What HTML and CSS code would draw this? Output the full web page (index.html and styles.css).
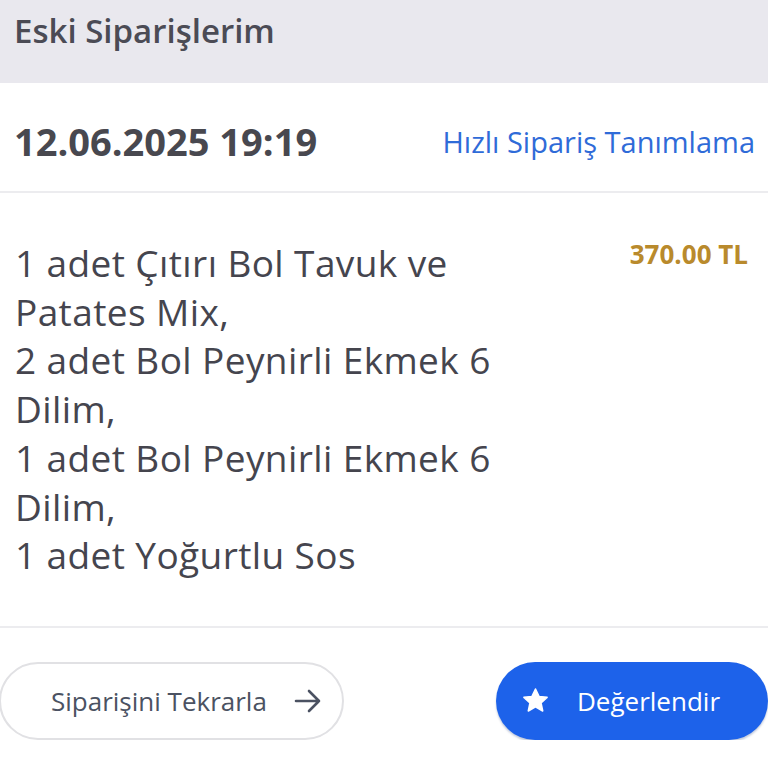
FILE: index.html
```html
<!DOCTYPE html>
<html lang="tr">
<head>
    <meta charset="UTF-8">
    <meta name="viewport" content="width=device-width, initial-scale=1.0">
    <title>Eski Siparişlerim</title>
    <link rel="stylesheet" href="styles.css">
</head>
<body>
    <div class="page-header">
        <h1 class="page-title">Eski Siparişlerim</h1>
    </div>

    <div class="order-card">
        <div class="order-head">
            <div class="order-date">12.06.2025 19:19</div>
            <a class="quick-link" href="#">Hızlı Sipariş Tanımlama</a>
        </div>

        <div class="order-body">
            <div class="order-items">
                1 adet Çıtırı Bol Tavuk ve Patates Mix,<br>
                2 adet Bol Peynirli Ekmek 6 Dilim,<br>
                1 adet Bol Peynirli Ekmek 6 Dilim,<br>
                1 adet Yoğurtlu Sos
            </div>
            <div class="order-price">370.00 TL</div>
        </div>

        <div class="order-actions">
            <button class="btn btn-outline">
                <span>Siparişini Tekrarla</span>
                <svg class="btn-arrow" viewBox="0 0 28 24" width="28" height="24">
                    <path d="M2 12 H25 M15 2 L25 12 L15 22" fill="none" stroke="#4b5262" stroke-width="2.6" stroke-linecap="round" stroke-linejoin="round"/>
                </svg>
            </button>
            <button class="btn btn-primary">
                <svg class="btn-star" viewBox="0 0 24 24" width="27" height="27">
                    <path d="M12 1.8 L15.1 8.4 L22.3 9.2 L16.9 14.1 L18.4 21.3 L12 17.6 L5.6 21.3 L7.1 14.1 L1.7 9.2 L8.9 8.4 Z" fill="#fff" stroke="#fff" stroke-width="1.4" stroke-linejoin="round"/>
                </svg>
                <span>Değerlendir</span>
            </button>
        </div>
    </div>
</body>
</html>
```

FILE: styles.css
```css
body {
    margin: 0;
    font-family: 'Open Sans', 'Noto Sans', sans-serif;
    background-color: #ffffff;
    color: #4a4a54;
    overflow: hidden;
}

.page-header {
    background-color: #e9e8ee;
    height: 83px;
    padding: 9px 14px 0;
    box-sizing: border-box;
}

.page-title {
    margin: 0;
    font-size: 33px;
    font-weight: 600;
    line-height: 44px;
    color: #4b4b55;
}

.order-head {
    display: flex;
    justify-content: space-between;
    align-items: center;
    height: 110px;
    padding: 8px 13px 0 14px;
    box-sizing: border-box;
    border-bottom: 2px solid #ececef;
}

.order-date {
    font-size: 38px;
    font-weight: 700;
    color: #48484f;
}

.quick-link {
    font-size: 29px;
    color: #2f6bd8;
    text-decoration: none;
}

.order-body {
    display: flex;
    justify-content: space-between;
    align-items: flex-start;
    padding: 46px 20px 46px 15px;
    border-bottom: 2px solid #ececef;
}

.order-items {
    width: 505px;
    font-size: 37px;
    line-height: 48.7px;
    letter-spacing: 0.4px;
    color: #45454e;
}

.order-price {
    margin-top: -2px;
    font-size: 26px;
    font-weight: 700;
    line-height: 34px;
    color: #b98a2c;
}

.order-actions {
    display: flex;
    justify-content: space-between;
    align-items: center;
    padding-top: 34px;
}

.btn {
    display: flex;
    align-items: center;
    height: 78px;
    border-radius: 39px;
    font-family: inherit;
    font-size: 26px;
    box-sizing: border-box;
    cursor: pointer;
}

.btn-outline {
    width: 345px;
    margin-left: -1px;
    padding: 0 20px 0 50px;
    justify-content: space-between;
    background: #ffffff;
    border: 2px solid #e1e1e4;
    color: #4b5262;
}

.btn-primary {
    width: 272px;
    padding: 0 0 0 26px;
    gap: 28px;
    background: #1d62ea;
    border: none;
    color: #ffffff;
    box-shadow: 0 2px 2px rgba(20, 50, 120, 0.25);
}

.btn-star {
    flex-shrink: 0;
}
```
